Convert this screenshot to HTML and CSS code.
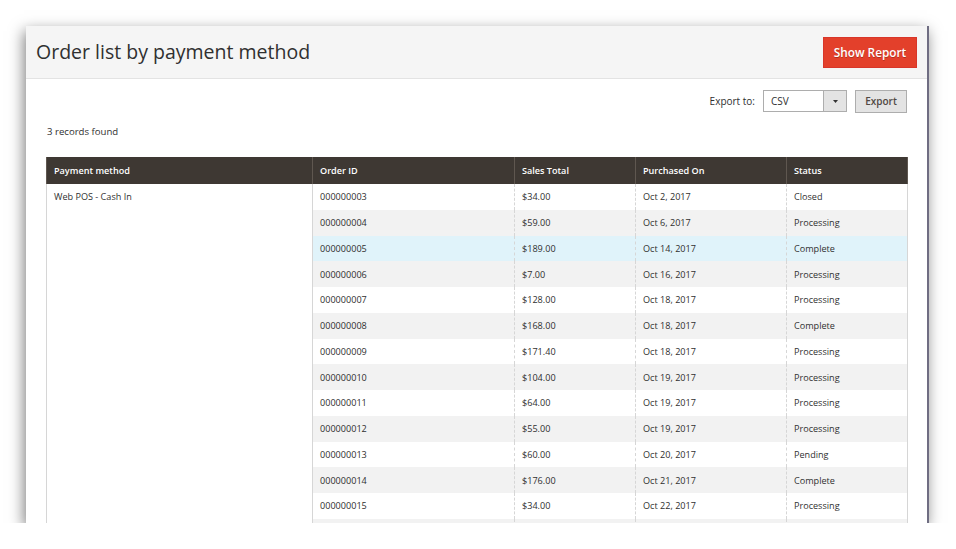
FILE: index.html
```html
<!DOCTYPE html>
<html>
<head>
<meta charset="utf-8">
<link rel="stylesheet" href="styles.css">
</head>
<body>
<div class="window">
  <div class="page-header">
    <h1 class="title">Order list by payment method</h1>
    <button class="btn-primary">Show Report</button>
  </div>
  <div class="content">
    <div class="export-row">
      <span class="export-label">Export to:</span>
      <div class="select"><span class="select-value">CSV</span><span class="select-arrow"><svg width="7" height="4" viewBox="0 0 7 4"><path d="M0 0h7L3.5 4z" fill="#333"/></svg></span></div>
      <button class="btn-export">Export</button>
    </div>
    <div class="records">3 records found</div>
    <table class="grid">
      <colgroup>
        <col class="w1"><col class="w2"><col class="w3"><col class="w4"><col class="w5">
      </colgroup>
      <thead>
        <tr>
          <th>Payment method</th>
          <th>Order ID</th>
          <th>Sales Total</th>
          <th>Purchased On</th>
          <th>Status</th>
        </tr>
      </thead>
      <tbody>
        <tr><td class="method" rowspan="14">Web POS - Cash In</td><td>000000003</td><td>$34.00</td><td>Oct 2, 2017</td><td>Closed</td></tr>
        <tr class="alt"><td>000000004</td><td>$59.00</td><td>Oct 6, 2017</td><td>Processing</td></tr>
        <tr class="hover"><td>000000005</td><td>$189.00</td><td>Oct 14, 2017</td><td>Complete</td></tr>
        <tr class="alt"><td>000000006</td><td>$7.00</td><td>Oct 16, 2017</td><td>Processing</td></tr>
        <tr><td>000000007</td><td>$128.00</td><td>Oct 18, 2017</td><td>Processing</td></tr>
        <tr class="alt"><td>000000008</td><td>$168.00</td><td>Oct 18, 2017</td><td>Complete</td></tr>
        <tr><td>000000009</td><td>$171.40</td><td>Oct 18, 2017</td><td>Processing</td></tr>
        <tr class="alt"><td>000000010</td><td>$104.00</td><td>Oct 19, 2017</td><td>Processing</td></tr>
        <tr><td>000000011</td><td>$64.00</td><td>Oct 19, 2017</td><td>Processing</td></tr>
        <tr class="alt"><td>000000012</td><td>$55.00</td><td>Oct 19, 2017</td><td>Processing</td></tr>
        <tr><td>000000013</td><td>$60.00</td><td>Oct 20, 2017</td><td>Pending</td></tr>
        <tr class="alt"><td>000000014</td><td>$176.00</td><td>Oct 21, 2017</td><td>Complete</td></tr>
        <tr><td>000000015</td><td>$34.00</td><td>Oct 22, 2017</td><td>Processing</td></tr>
        <tr class="alt"><td></td><td></td><td></td><td></td></tr>
      </tbody>
    </table>
  </div>
</div>
</body>
</html>
```
FILE: styles.css
```css
html, body {
  margin: 0;
  padding: 0;
  background: #ffffff;
}
body {
  padding: 26px 0 0 26px;
  font-family: "Open Sans", "Liberation Sans", sans-serif;
  color: #303030;
  overflow: hidden;
}
.window {
  width: 903px;
  height: 497px;
  background: #ffffff;
  border-right: 2px solid #6f6d82;
  box-shadow: -2px 5px 14px rgba(0, 0, 0, 0.5);
  overflow: hidden;
  box-sizing: border-box;
}
.page-header {
  height: 53px;
  box-sizing: border-box;
  background: #f5f5f5;
  border-bottom: 1px solid #e3e3e3;
  display: flex;
  align-items: center;
  justify-content: space-between;
  padding: 0 10px 1px 10px;
}
.title {
  margin: 0;
  font-size: 19.5px;
  font-weight: 400;
  color: #303030;
}
.btn-primary {
  width: 94px;
  height: 31px;
  margin-top: 1px;
  background: #e3402b;
  border: 1px solid #d8362a;
  color: #ffffff;
  font-family: "Open Sans", "Liberation Sans", sans-serif;
  font-weight: 600;
  font-size: 11.8px;
  text-shadow: 0 1px 0 rgba(0, 0, 0, 0.25);
  padding: 0;
}
.content {
  padding: 11px 20px 0 20px;
}
.export-row {
  display: flex;
  justify-content: flex-end;
  align-items: center;
  height: 22px;
}
.export-label {
  font-size: 10px;
  margin-right: 8px;
}
.select {
  width: 84px;
  height: 22px;
  box-sizing: border-box;
  border: 1px solid #adadad;
  display: flex;
  background: #fff;
}
.select-value {
  flex: 1;
  font-size: 10px;
  line-height: 20px;
  padding-left: 7px;
  color: #303030;
}
.select-arrow {
  width: 22px;
  background: #e3e3e3;
  border-left: 1px solid #adadad;
  display: flex;
  align-items: center;
  justify-content: center;
}
.select-arrow svg {
  width: 5px;
  height: 3px;
}
.btn-export {
  margin-left: 8px;
  width: 52px;
  height: 23px;
  background: #e3e3e3;
  border: 1px solid #adadad;
  font-family: "Open Sans", "Liberation Sans", sans-serif;
  font-weight: 600;
  font-size: 10px;
  color: #514943;
  padding: 0;
}
.records {
  font-size: 9.6px;
  line-height: 14px;
  margin-top: 13px;
  margin-left: 1px;
}
.grid {
  margin-top: 18px;
  width: 861px;
  border-collapse: collapse;
  table-layout: fixed;
  font-size: 9.1px;
}
.grid col.w1 { width: 266px; }
.grid col.w2 { width: 202px; }
.grid col.w3 { width: 121px; }
.grid col.w4 { width: 151px; }
.grid col.w5 { width: 121px; }
.grid th {
  background: #3e3833;
  color: #ffffff;
  font-weight: 600;
  text-align: left;
  height: 26px;
  padding: 0 0 1px 7px;
  border-left: 1px solid #5f5750;
  border-right: 1px solid #5f5750;
}
.grid td {
  height: 25.75px;
  padding: 0 0 0 7px;
  border-left: 1px dashed #d6d6d6;
  border-right: 1px dashed #d6d6d6;
  color: #303030;
  vertical-align: middle;
}
.grid tr.alt td {
  background: #f2f2f2;
}
.grid tr.hover td {
  background: #e0f3fa;
}
.grid td.method {
  vertical-align: top;
  padding-top: 6px;
  background: #ffffff !important;
  border-left: 1px solid #d6d6d6;
  border-right: 1px solid #d6d6d6;
}
.grid tr td:last-child {
  border-right: 1px solid #d6d6d6;
}
```
